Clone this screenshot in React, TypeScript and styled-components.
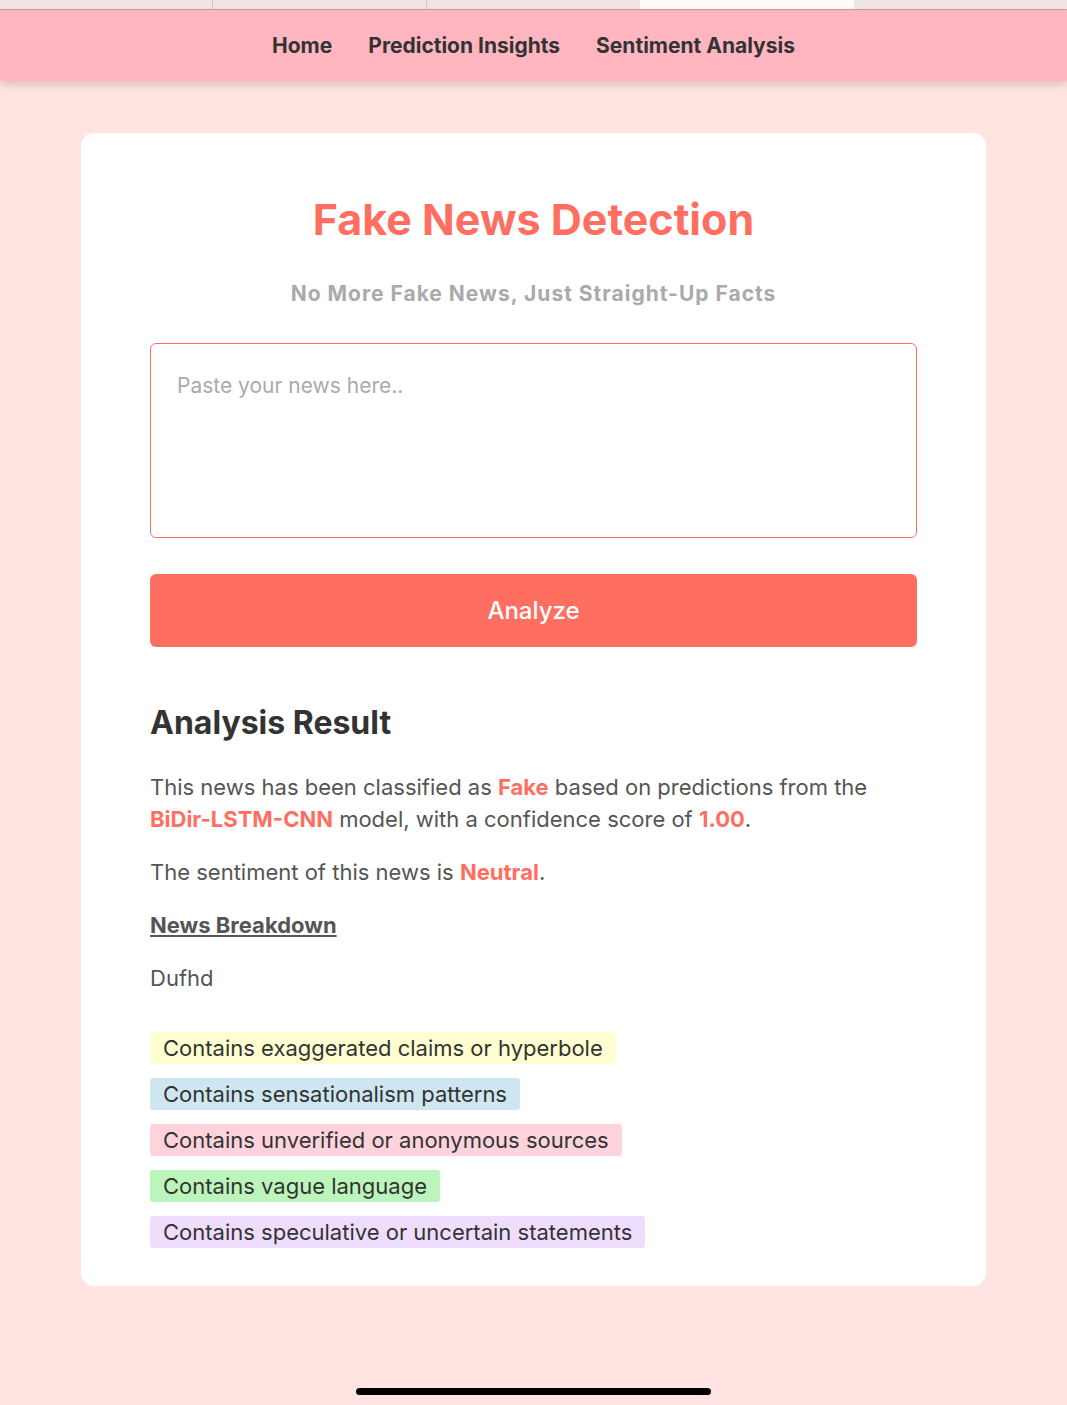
import React from "react";
import styled, { createGlobalStyle } from "styled-components";

const GlobalStyle = createGlobalStyle`
  * { box-sizing: border-box; }
  body {
    margin: 0;
    background: #ffe4e1;
    color: #555555;
    font-family: Inter, "Open Sans", sans-serif;
    font-size: 22px;
    line-height: 32px;
  }
`;

const Page = styled.div`
  min-height: 100vh;
  display: flex;
  flex-direction: column;
`;

const TabStrip = styled.div`
  height: 10px;
  display: grid;
  grid-template-columns: repeat(5, 1fr);
  background: #f1e6e5;
  border-bottom: 1px solid #c39fa3;
`;

const Tab = styled.div<{ $active?: boolean; $divided?: boolean }>`
  background: ${(p) => (p.$active ? "#fffcfc" : "transparent")};
  border-right: ${(p) => (p.$divided ? "1px solid #d2c6c6" : "none")};
`;

const NavBar = styled.nav`
  height: 71px;
  display: flex;
  align-items: center;
  justify-content: center;
  gap: 36px;
  background: #ffb6c1;
  box-shadow: 0 4px 8px rgba(0, 0, 0, 0.14);
`;

const NavLink = styled.a`
  color: #333333;
  font-size: 21px;
  font-weight: 700;
  text-decoration: none;
`;

const Card = styled.main`
  margin: 52px 81px 0;
  padding: 58px 69px 38px;
  display: flex;
  flex-direction: column;
  background: #ffffff;
  border-radius: 13px;
`;

const Title = styled.h1`
  margin: 0;
  color: #ff6f61;
  font-size: 43px;
  line-height: 56px;
  text-align: center;
`;

const Tagline = styled.p`
  margin: 31px 0 0;
  color: #aaaaaa;
  font-size: 21px;
  font-weight: 700;
  letter-spacing: 1px;
  text-align: center;
`;

const Form = styled.form`
  margin-top: 33px;
  display: flex;
  flex-direction: column;
  gap: 36px;
`;

const NewsInput = styled.textarea`
  display: block;
  width: 100%;
  height: 195px;
  padding: 26px;
  border: 1px solid #ff6f61;
  border-radius: 6px;
  background: #ffffff;
  color: #333333;
  font: inherit;
  font-size: 21px;
  resize: none;
  &::placeholder { color: #aaaaaa; opacity: 1; }
`;

const AnalyzeButton = styled.button`
  height: 73px;
  border: 0;
  border-radius: 6px;
  background: #ff6f61;
  color: #ffffff;
  font: inherit;
  font-size: 24px;
  font-weight: 500;
`;

const Result = styled.section`
  margin-top: 55px;
  display: flex;
  flex-direction: column;
  gap: 21px;
`;

const ResultTitle = styled.h2`
  margin: 0 0 6px;
  color: #333333;
  font-size: 32px;
  line-height: 42px;
`;

const Text = styled.p`
  margin: 0;
`;

const Highlight = styled.strong`
  color: #ff6f61;
  font-weight: 700;
  white-space: nowrap;
`;

const BreakdownTitle = styled.h3`
  margin: 0;
  font-size: 22px;
  font-weight: 700;
  text-decoration: underline;
`;

const Findings = styled.ul`
  margin: 17px 0 0;
  padding: 0;
  display: flex;
  flex-direction: column;
  align-items: flex-start;
  gap: 14px;
  list-style: none;
`;

const Finding = styled.li<{ $tone: string }>`
  padding: 0 13px;
  border-radius: 3px;
  background: ${(p) => p.$tone};
  color: #333333;
`;

const HomeIndicator = styled.div`
  width: 355px;
  max-width: 60%;
  height: 7px;
  margin: auto auto 10px;
  border-radius: 4px;
  background: #000000;
`;

const findings = [
  { text: "Contains exaggerated claims or hyperbole", tone: "#ffffd1" },
  { text: "Contains sensationalism patterns", tone: "#cee6f0" },
  { text: "Contains unverified or anonymous sources", tone: "#ffd3db" },
  { text: "Contains vague language", tone: "#bbf5bb" },
  { text: "Contains speculative or uncertain statements", tone: "#efddfd" },
];

export default function App() {
  return (
    <Page>
      <GlobalStyle />
      <TabStrip aria-hidden="true">
        <Tab $divided />
        <Tab $divided />
        <Tab />
        <Tab $active />
        <Tab />
      </TabStrip>
      <NavBar>
        <NavLink href="#home">Home</NavLink>
        <NavLink href="#insights">Prediction Insights</NavLink>
        <NavLink href="#sentiment">Sentiment Analysis</NavLink>
      </NavBar>
      <Card>
        <Title>Fake News Detection</Title>
        <Tagline>No More Fake News, Just Straight-Up Facts</Tagline>
        <Form onSubmit={(e) => e.preventDefault()}>
          <NewsInput aria-label="News text" placeholder="Paste your news here.." />
          <AnalyzeButton type="submit">Analyze</AnalyzeButton>
        </Form>
        <Result>
          <ResultTitle>Analysis Result</ResultTitle>
          <Text>
            This news has been classified as <Highlight>Fake</Highlight> based on predictions from
            the <Highlight>BiDir-LSTM-CNN</Highlight> model, with a confidence score of{" "}
            <Highlight>1.00</Highlight>.
          </Text>
          <Text>
            The sentiment of this news is <Highlight>Neutral</Highlight>.
          </Text>
          <BreakdownTitle>News Breakdown</BreakdownTitle>
          <Text>Dufhd</Text>
          <Findings>
            {findings.map((f) => (
              <Finding key={f.text} $tone={f.tone}>
                {f.text}
              </Finding>
            ))}
          </Findings>
        </Result>
      </Card>
      <HomeIndicator />
    </Page>
  );
}
